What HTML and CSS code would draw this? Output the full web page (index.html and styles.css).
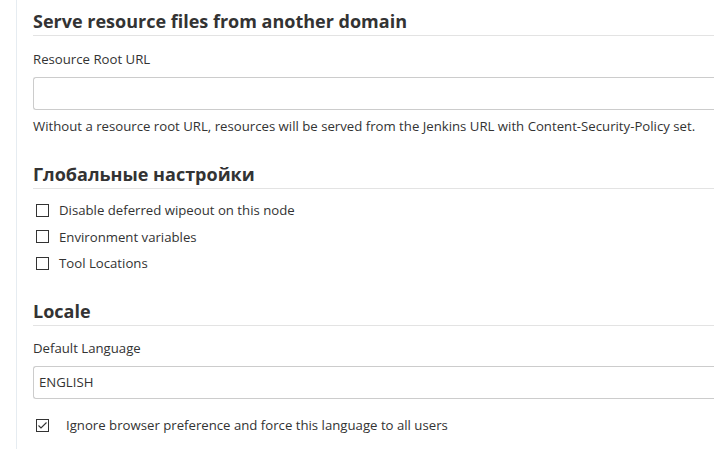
FILE: index.html
```html
<!DOCTYPE html>
<html>
<head>
<meta charset="utf-8">
<link rel="stylesheet" href="styles.css">
</head>
<body>
<div class="page">
  <div class="rail"></div>
  <main class="content">
    <section class="section">
      <h2 class="heading">Serve resource files from another domain</h2>
      <div class="field">
        <label class="label">Resource Root URL</label>
        <div class="input"></div>
        <div class="help">Without a resource root URL, resources will be served from the Jenkins URL with Content-Security-Policy set.</div>
      </div>
    </section>
    <section class="section">
      <h2 class="heading">Глобальные настройки</h2>
      <div class="checks">
        <label class="check"><span class="box"></span><span>Disable deferred wipeout on this node</span></label>
        <label class="check"><span class="box"></span><span>Environment variables</span></label>
        <label class="check"><span class="box"></span><span>Tool Locations</span></label>
      </div>
    </section>
    <section class="section">
      <h2 class="heading">Locale</h2>
      <div class="field field-tight">
        <label class="label">Default Language</label>
        <div class="input select">ENGLISH</div>
        <label class="check check-wide"><span class="box checked"><svg width="13" height="13" viewBox="0 0 13 13"><path d="M2.5 6.5 L5 9 L10.5 3.5" fill="none" stroke="#333" stroke-width="1.1"/></svg></span><span>Ignore browser preference and force this language to all users</span></label>
      </div>
    </section>
  </main>
</div>
</body>
</html>
```

FILE: styles.css
```css
html, body {
  margin: 0;
  padding: 0;
  background: #fff;
}
body {
  font-family: "Open Sans", "Noto Sans", sans-serif;
  color: #333;
  font-size: 13.2px;
  overflow: hidden;
}
.page {
  display: flex;
  height: 449px;
}
.rail {
  width: 16px;
  flex: none;
  border-right: 1px solid #e6ecf1;
}
.content {
  flex: 1;
  padding-left: 16px;
  min-width: 0;
}
.section {
  margin-bottom: 17px;
}
.heading {
  margin: 0;
  font-size: 18px;
  font-weight: 700;
  line-height: 26px;
  padding-top: 8px;
  padding-bottom: 1px;
  border-bottom: 1px solid #e3e3e3;
  white-space: nowrap;
}
.field {
  padding-top: 13px;
}
.field-tight {
  padding-top: 12px;
}
.label {
  display: block;
  line-height: 20px;
}
.input {
  margin-top: 8px;
  border: 1px solid #ccc;
  border-right: none;
  border-radius: 3px 0 0 3px;
  box-sizing: border-box;
  height: 33px;
  margin-right: -2px;
}
.select {
  padding-left: 5px;
  line-height: 31px;
}
.help {
  margin-top: 6px;
  line-height: 20px;
  white-space: nowrap;
}
.checks {
  padding-top: 11px;
  display: flex;
  flex-direction: column;
  gap: 6.5px;
}
.check {
  display: flex;
  align-items: center;
  gap: 10px;
  line-height: 20px;
  padding-left: 3px;
}
.box {
  width: 11px;
  height: 11px;
  border: 1px solid #333;
  flex: none;
  position: relative;
}
.box svg {
  position: absolute;
  left: -1px;
  top: -1px;
}
.check-wide {
  margin-top: 16px;
  gap: 17px;
}
```
